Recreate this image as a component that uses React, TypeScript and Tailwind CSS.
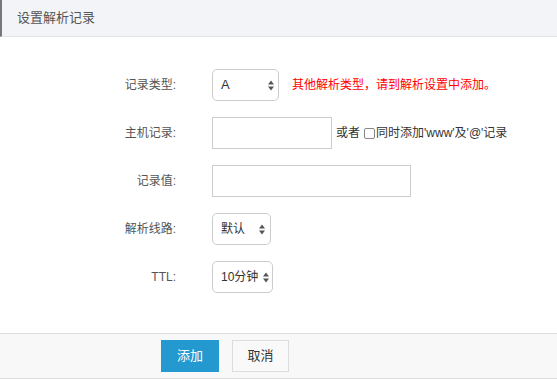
import React from 'react';

const font = { fontFamily: '"Liberation Sans", "Noto Sans CJK SC", sans-serif' };

function Arrows() {
  return (
    <svg width="6" height="11" viewBox="0 0 6 11" className="shrink-0">
      <path d="M3 0.5 L6 4.5 L0 4.5 Z" fill="#555" />
      <path d="M3 10.5 L6 6.5 L0 6.5 Z" fill="#555" />
    </svg>
  );
}

function Select({ value, cls }: { value: string; cls: string }) {
  return (
    <div
      className={`${cls} h-[32px] flex items-center justify-between pl-[8px] border border-[#cccccc] rounded-[5px] bg-white text-[#333] whitespace-nowrap`}
    >
      <span>{value}</span>
      <Arrows />
    </div>
  );
}

function Row({ label, children }: { label: string; children: React.ReactNode }) {
  return (
    <div className="flex items-center h-[32px]">
      <div className="w-[176px] text-right text-[12px] text-[#555]">{label}</div>
      <div className="ml-[36px] flex items-center">{children}</div>
    </div>
  );
}

export default function App() {
  return (
    <div className="w-[557px] h-[381px] bg-white overflow-hidden" style={font}>
      <div className="h-[37px] flex items-center pl-[15px] bg-[#f3f4f8] border-l-2 border-[#777] border-b border-b-[#e3e5ea]">
        <span className="text-[13px] text-[#555]">设置解析记录</span>
      </div>

      <div className="flex flex-col gap-4 pt-[32px]">
        <Row label="记录类型:">
          <Select value="A" cls="w-[67px] pr-[4px] text-[13px]" />
          <span className="ml-[13px] text-[12px] text-[#ff0000]">其他解析类型，请到解析设置中添加。</span>
        </Row>
        <Row label="主机记录:">
          <div className="w-[120px] h-[32px] border border-[#cccccc] bg-white" />
          <span className="ml-[4px] text-[12px] text-[#333]">或者</span>
          <span className="ml-[4px] w-[11px] h-[11px] rounded-[2px] border border-[#888] bg-white" />
          <span className="ml-[1px] text-[12px] text-[#333]">同时添加'www'及'@'记录</span>
        </Row>
        <Row label="记录值:">
          <div className="w-[199px] h-[32px] border border-[#cccccc] bg-white" />
        </Row>
        <Row label="解析线路:">
          <Select value="默认" cls="w-[59px] pr-[5px] text-[12px]" />
        </Row>
        <Row label="TTL:">
          <Select value="10分钟" cls="w-[61px] pr-[3px] text-[12px]" />
        </Row>
      </div>

      <div className="mt-[40px] h-[46px] bg-[#f8f8f8] border-t border-b border-[#dddddd] flex pt-[6px] pl-[161px] gap-[13px]">
        <button className="w-[58px] h-[32px] bg-[#2399d0] text-white text-[13px]">添加</button>
        <button className="w-[57px] h-[32px] border border-[#dddddd] bg-[#f9f9f9] text-[#333] text-[13px]">取消</button>
      </div>
    </div>
  );
}
